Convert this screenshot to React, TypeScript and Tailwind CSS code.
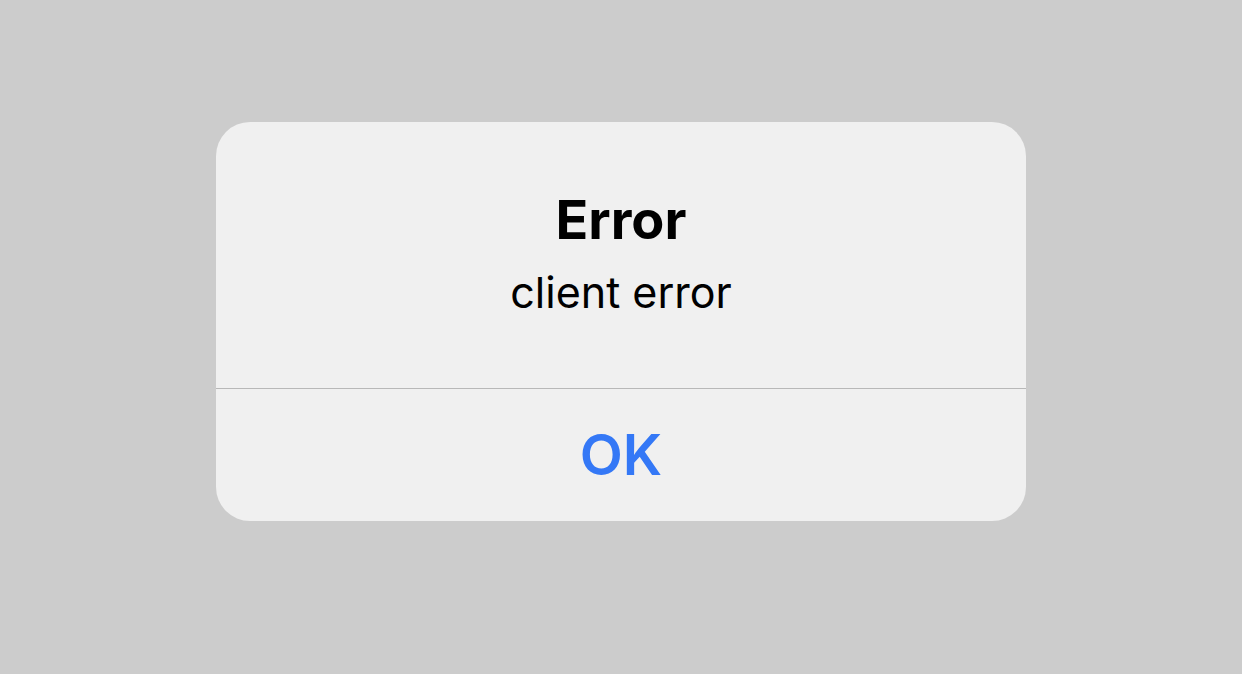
// 알림 다이얼로그 — 제목 + 메시지 + 확인 버튼
export default function App() {
  return (
    <div
      className="w-[1242px] h-[674px] bg-[#cccccc] flex justify-center pt-[122px]"
      style={{ fontFamily: 'Inter, "Noto Sans", "Liberation Sans", sans-serif' }}
    >
      <div className="w-[810px] h-[399px] bg-[#f0f0f0] rounded-[34px] flex flex-col overflow-hidden">
        {/* 본문 */}
        <div className="h-[267px] flex flex-col items-center pt-[71px] border-b border-[#b8b8b8]">
          <h1 className="text-[54px] leading-none font-bold text-black">Error</h1>
          <p className="mt-[24px] text-[43px] leading-none text-black">client error</p>
        </div>
        {/* 버튼 */}
        <button className="flex-1 flex items-center justify-center text-[56px] leading-none font-semibold text-[#3478f6]">
          OK
        </button>
      </div>
    </div>
  )
}
